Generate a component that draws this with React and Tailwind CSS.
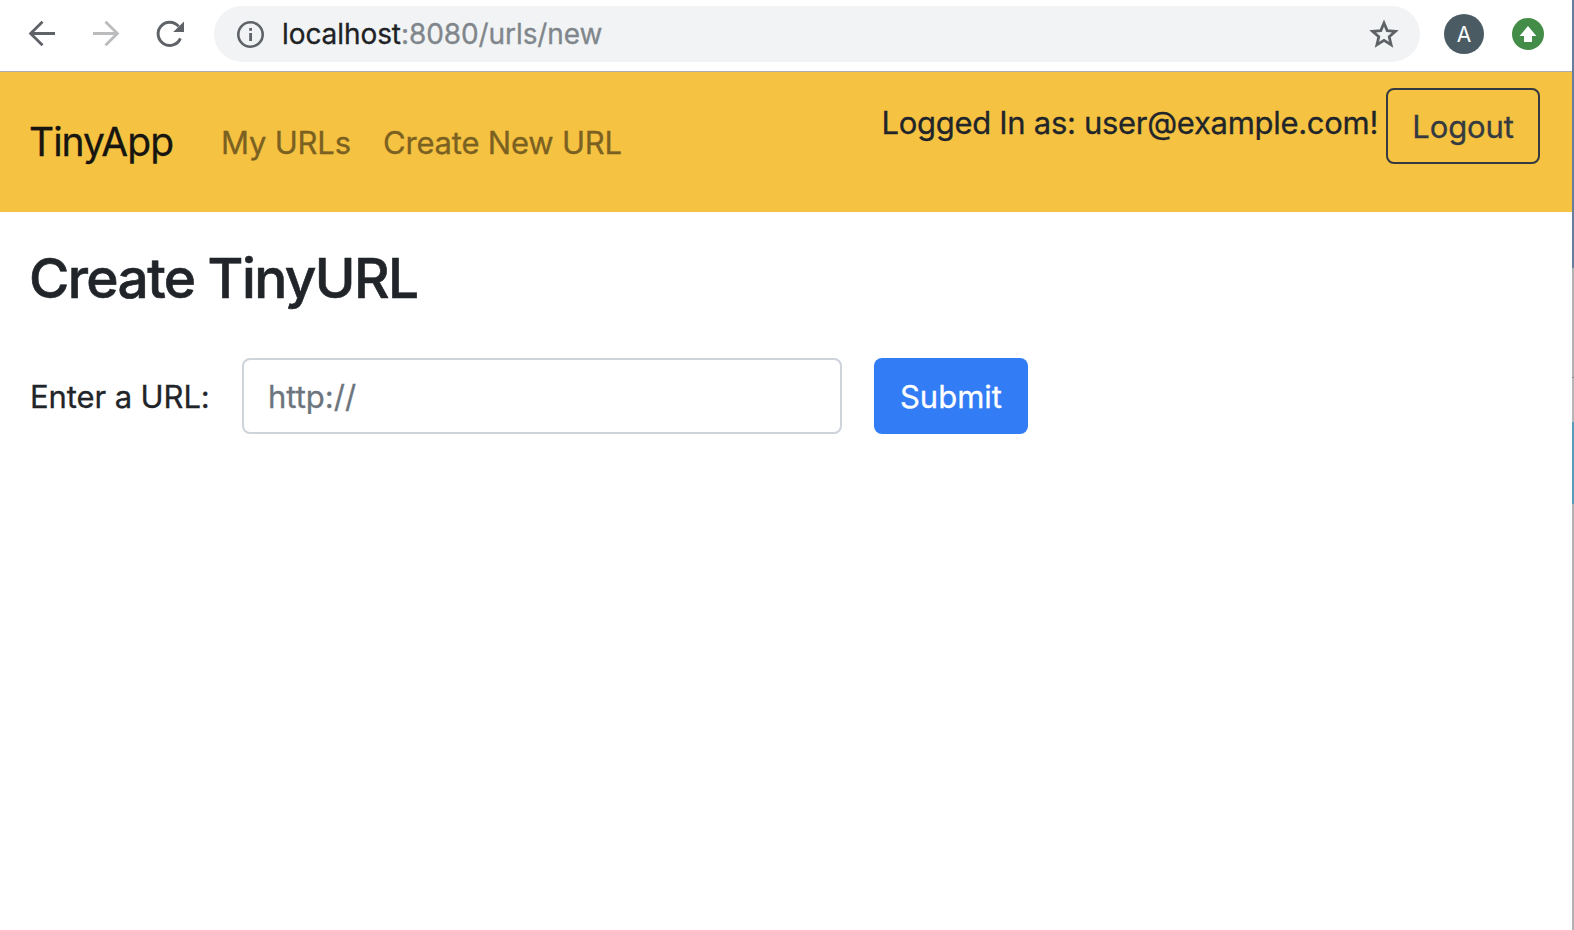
import React from "react";

function Toolbar() {
  return (
    <div className="flex h-[72px] items-start border-b border-[#a9acb0] bg-white">
      <div className="flex h-[68px] items-center">
        <svg className="ml-[26px] h-8 w-8 shrink-0" viewBox="0 0 32 32" fill="none" stroke="#5f6368" strokeWidth="2.8">
          <path d="M29 15.5H4.8M16.5 3.7L4.6 15.5L16.5 27.3" />
        </svg>
        <svg className="ml-8 h-8 w-8 shrink-0" viewBox="0 0 32 32" fill="none" stroke="#babcbe" strokeWidth="2.8">
          <path d="M3 15.5H27.2M15.5 3.7L27.4 15.5L15.5 27.3" />
        </svg>
        <svg className="ml-8 h-8 w-8 shrink-0" viewBox="0 0 32 32" fill="none" stroke="#5f6368" strokeWidth="2.9">
          <path d="M26.4 20.4A11.6 11.6 0 1 1 24.6 8.4" />
          <path d="M30 3.4V14H19.2Z" fill="#5f6368" stroke="none" />
        </svg>
        <div className="ml-[28px] flex h-14 w-[1206px] items-center rounded-full bg-[#f1f3f4]">
          <svg className="ml-[22px] h-7 w-7 shrink-0" viewBox="0 0 28 28" fill="none">
            <circle cx="14.5" cy="14.5" r="12.2" stroke="#5f6368" strokeWidth="2.6" />
            <path d="M13.2 8h2.8v2.8h-2.8zM13.2 13h2.8v8h-2.8z" fill="#5f6368" />
          </svg>
          <div className="ml-[18px] grow text-[28px] leading-none tracking-[-0.08px] text-[#80868b] [-webkit-text-stroke:0.3px]">
            <span className="text-[#202124]">localhost</span>:8080/urls/new
          </div>
          <svg className="mr-[20px] h-8 w-8 shrink-0" viewBox="0 0 32 32">
            <path
              d="M16 5L19.2 12.6L27.4 13.3L21.2 18.7L23.1 26.7L16 22.4L8.9 26.7L10.8 18.7L4.6 13.3L12.8 12.6Z"
              fill="none"
              stroke="#5f6368"
              strokeWidth="2.8"
            />
          </svg>
        </div>
        <div className="ml-6 flex h-10 w-10 items-center justify-center rounded-full bg-[#4a5b64] pt-px text-[21px] text-white">
          A
        </div>
        <svg className="ml-7 h-8 w-8 shrink-0" viewBox="0 0 32 32">
          <circle cx="16" cy="16" r="16" fill="#448d48" />
          <path d="M16 8L24.4 18H20V24H12V18H7.6Z" fill="#fff" />
        </svg>
      </div>
    </div>
  );
}

function Navbar() {
  return (
    <nav className="flex h-[140px] items-start bg-[#f5c242] pr-8 text-[31px] [-webkit-text-stroke:0.3px]">
      <a className="ml-[29px] w-[145px] pt-[40px] text-[39px] leading-[60px] tracking-[-1px] text-[#17150f]">TinyApp</a>
      <a className="ml-[47px] w-[130px] pt-[47px] leading-[48px] tracking-[-0.2px] whitespace-nowrap text-[#7b6121]">
        My URLs
      </a>
      <a className="ml-[32px] pt-[47px] leading-[48px] tracking-[-0.2px] text-[#7b6121]">Create New URL</a>
      <span className="mr-[8px] ml-auto pt-[27px] leading-[48px] tracking-[-0.3px] text-[#212529]">
        Logged In as: user@example.com!
      </span>
      <button className="mt-4 h-[76px] w-[154px] shrink-0 rounded-lg border-2 border-[#343a40] pt-px leading-[48px] tracking-[-0.15px] text-[#343a40]">
        Logout
      </button>
    </nav>
  );
}

export default function App() {
  return (
    <div className="flex h-[930px] w-[1574px] overflow-hidden bg-white font-['Inter',sans-serif]">
      <div className="flex w-[1572px] flex-col">
        <Toolbar />
        <Navbar />
        <main className="pl-[30px] text-[#212529]">
          <h1 className="-ml-px pt-[33px] text-[55px] leading-[67px] font-medium tracking-[-1.6px] [-webkit-text-stroke:0.6px]">
            Create TinyURL
          </h1>
          <form className="mt-[46px] flex h-[76px] items-center text-[31px] leading-[48px] [-webkit-text-stroke:0.3px]">
            <label className="w-[212px] pt-[2px] tracking-[-0.1px] whitespace-nowrap">Enter a URL:</label>
            <input
              className="h-[76px] w-[600px] rounded-lg border-2 border-[#ced4da] px-6 pt-px placeholder:text-[#6c757d] placeholder:opacity-100"
              placeholder="http://"
            />
            <button type="button" className="ml-8 h-[76px] w-[154px] rounded-lg bg-[#327df6] pt-[2px] text-white">
              Submit
            </button>
          </form>
        </main>
      </div>
      <div className="flex w-[2px] flex-col">
        <div className="h-[268px] bg-[#687c9c]" />
        <div className="h-[109px] bg-[#b0b1b2]" />
        <div className="h-px bg-[#8c8d8e]" />
        <div className="h-[44px] bg-[#b4b5b6]" />
        <div className="h-[82px] bg-[#5a9cb8]" />
        <div className="grow bg-[#b0b1b2]" />
      </div>
    </div>
  );
}
